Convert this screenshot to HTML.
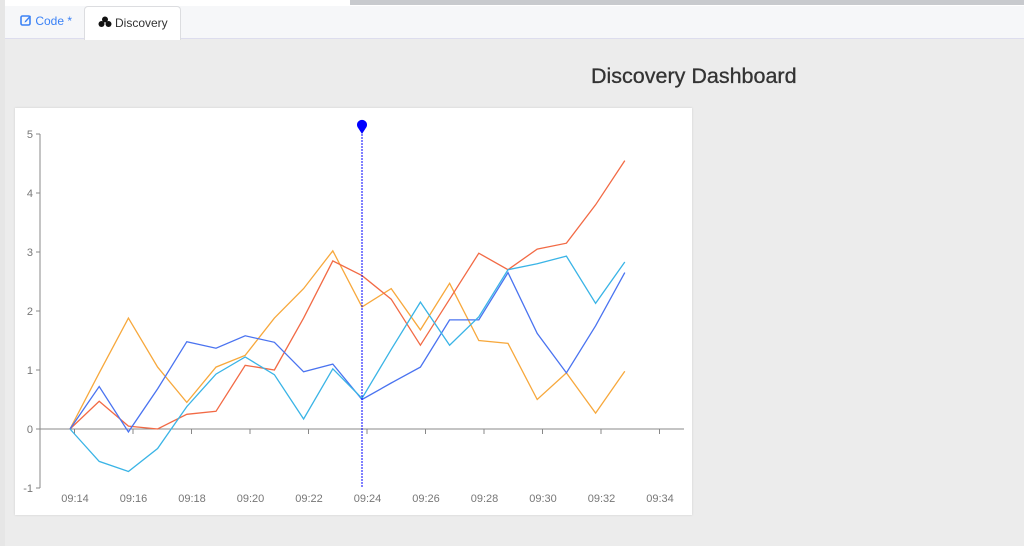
<!DOCTYPE html>
<html><head><style>
body{margin:0;width:1024px;height:546px;background:#ececec;font-family:"Liberation Sans",sans-serif;position:relative;overflow:hidden}
.top{position:absolute;left:0;top:0;width:1024px;height:6px;background:#fff}
.top2{position:absolute;left:350px;top:0;width:674px;height:5px;background:#c8cace}
.bar{position:absolute;left:5px;top:6px;width:1019px;height:32px;background:#f6f7f9;border-bottom:1px solid #dde}
.tab1{position:absolute;left:20px;top:14px;font-size:12px;color:#3b82f6}
.tab2{position:absolute;left:84px;top:6px;width:95px;height:33px;background:#fff;border:1px solid #dcdde0;border-bottom:none;border-radius:4px 4px 0 0;font-size:12px;color:#333}
.tab2 span{position:absolute;left:30px;top:9px}
h1{position:absolute;left:591px;top:64px;margin:0;font-size:21.5px;font-weight:normal;color:#333;-webkit-text-stroke:0.3px #333}
.card{position:absolute;left:15px;top:108px;width:677px;height:407px;background:#fff;box-shadow:0 0 2px #ccc}
.lb{position:absolute;left:0;top:0;width:5px;height:546px;background:#e6e6e6}
</style></head><body>
<div class="top"></div><div class="top2"></div><div class="lb"></div>
<div class="bar"></div>
<div class="tab1"><svg width="12" height="12" viewBox="0 0 12 12" style="vertical-align:-1px"><rect x="1" y="2" width="9" height="9" rx="1.5" fill="none" stroke="#3b82f6" stroke-width="1.6"/><path d="M5 7 L10 1.5 L11 2.5 L6 8 L4.5 8.5Z" fill="#3b82f6"/></svg> Code *</div>
<div class="tab2"><svg width="14" height="12" viewBox="0 0 14 12" style="position:absolute;left:13px;top:9px"><circle cx="7" cy="3.5" r="3" fill="#111"/><circle cx="3.5" cy="8" r="3" fill="#111"/><circle cx="10.5" cy="8" r="3" fill="#111"/></svg><span>Discovery</span></div>
<h1>Discovery Dashboard</h1>
<div class="card"></div>
<svg id="ch" width="1024" height="546" style="position:absolute;left:0;top:0" font-family="Liberation Sans" font-size="11" fill="#777"></svg>
<script>
var s='';
var y0=429,u=59;
function Y(v){return y0-v*u}
s+='<line x1="40" y1="134" x2="40" y2="488" stroke="#888"/>';
s+='<line x1="40" y1="429" x2="684" y2="429" stroke="#888"/>';
for(var v=-1;v<=5;v++){s+='<line x1="36" y1="'+Y(v)+'" x2="40" y2="'+Y(v)+'" stroke="#888"/><text x="33" y="'+(Y(v)+4)+'" text-anchor="end">'+v+'</text>';}
for(var i=0;i<11;i++){var x=75+i*58.5;s+='<line x1="'+(133+(i-1)*58.5)+'" y1="429" x2="'+(133+(i-1)*58.5)+'" y2="434" stroke="#888"/>';s+='<text x="'+x+'" y="502" text-anchor="middle">09:'+(14+2*i)+'</text>';}
var D=[["#f7a83c",[0,.95,1.88,1.05,.45,1.05,1.25,1.88,2.38,3.02,2.07,2.38,1.68,2.47,1.5,1.45,.5,.95,.27,.98]],
["#f26a45",[0,.47,.05,0,.25,.3,1.08,1.0,1.88,2.85,2.6,2.2,1.42,2.2,2.98,2.7,3.05,3.15,3.8,4.55]],
["#4a73f0",[0,.72,-.05,.68,1.48,1.37,1.58,1.47,.97,1.1,.5,.78,1.05,1.85,1.85,2.65,1.62,.95,1.75,2.65]],
["#3ab4e6",[0,-.55,-.72,-.33,.38,.93,1.22,.92,.17,1.02,.52,1.35,2.15,1.42,1.9,2.7,2.8,2.93,2.13,2.83]]];
D.forEach(function(d){var p=d[1].map(function(v,i){return (70+i*29.2).toFixed(1)+','+Y(v).toFixed(1)}).join(' ');s+='<polyline points="'+p+'" fill="none" stroke="'+d[0]+'" stroke-width="1.3"/>';});
s+='<line x1="362" y1="128" x2="362" y2="488" stroke="#00f" stroke-dasharray="2,1"/>';
s+='<path d="M362 134 L357.5 127 A5 5 0 1 1 366.5 127 Z" fill="#00f"/>';
document.getElementById('ch').innerHTML=s;
</script>
</body></html>
